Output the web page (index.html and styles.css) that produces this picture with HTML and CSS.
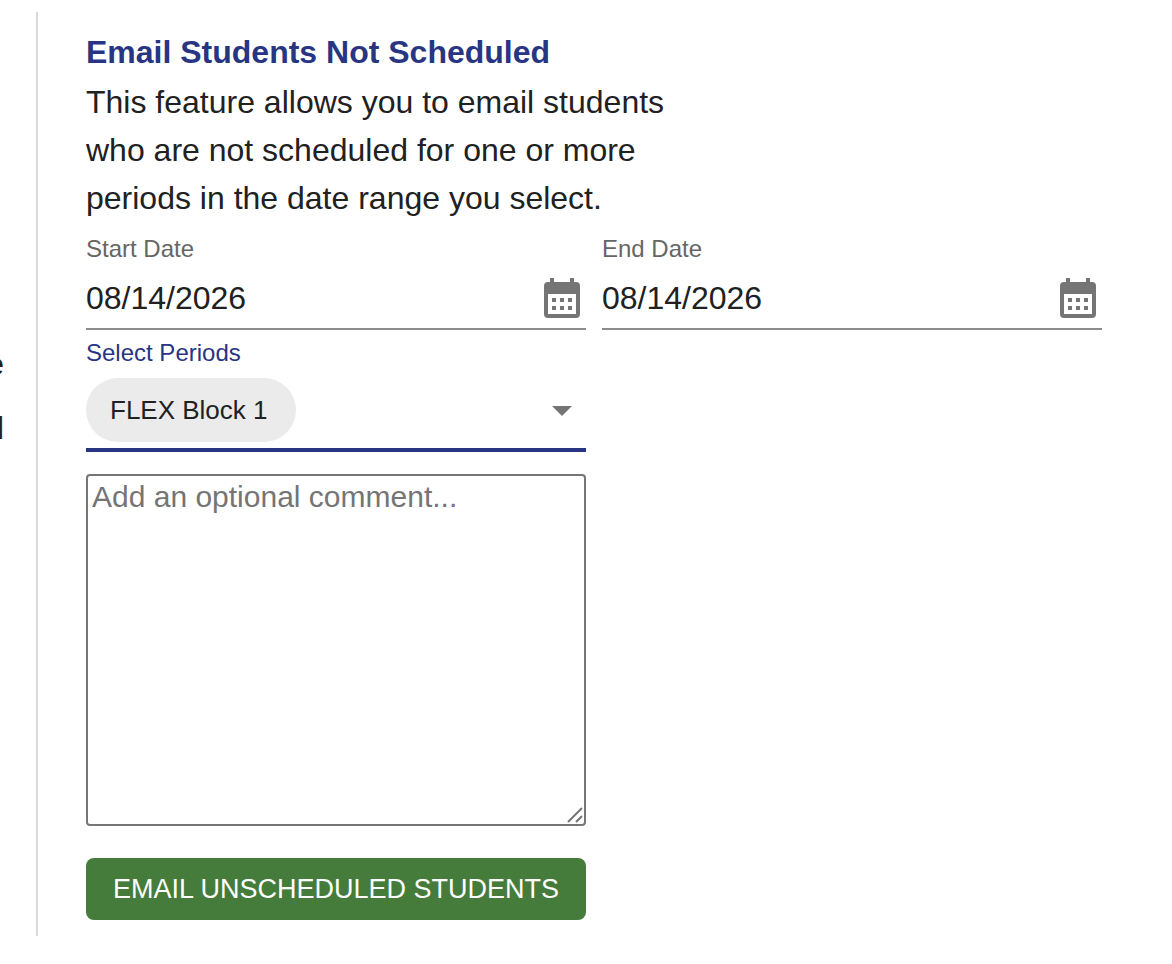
FILE: index.html
```
<!DOCTYPE html>
<html lang="en">
<head>
    <meta charset="UTF-8">
    <meta name="viewport" content="width=device-width, initial-scale=1.0">
    <title>Email Students Not Scheduled</title>
    <link rel="stylesheet" href="styles.css">
</head>
<body>
    <div class="page">
        <aside class="side">
            <p>e</p>
            <p>d</p>
        </aside>

        <main class="panel">
            <h1>Email Students Not Scheduled</h1>
            <p class="intro">This feature allows you to email students who are not scheduled for one or more periods in the date range you select.</p>

            <form id="emailForm">
                <div class="field">
                    <label for="startDate">Start Date</label>
                    <div class="control">
                        <input type="text" id="startDate" name="startDate" value="08/14/2026">
                        <button type="button" class="icon-btn" aria-label="Choose start date">
                            <svg width="36" height="40" viewBox="0 0 36 40">
                                <path fill="currentColor" fill-rule="evenodd" d="M6 0h4v4h16V0h4v4h2a4 4 0 0 1 4 4v28a4 4 0 0 1-4 4H4a4 4 0 0 1-4-4V8a4 4 0 0 1 4-4h2zM4 16v20h28V16zM8 20h4v4H8zM16 20h4v4h-4zM24 20h4v4h-4zM8 28h4v4H8zM16 28h4v4h-4zM24 28h4v4h-4z"/>
                            </svg>
                        </button>
                    </div>
                </div>

                <div class="field">
                    <label for="endDate">End Date</label>
                    <div class="control">
                        <input type="text" id="endDate" name="endDate" value="08/14/2026">
                        <button type="button" class="icon-btn" aria-label="Choose end date">
                            <svg width="36" height="40" viewBox="0 0 36 40">
                                <path fill="currentColor" fill-rule="evenodd" d="M6 0h4v4h16V0h4v4h2a4 4 0 0 1 4 4v28a4 4 0 0 1-4 4H4a4 4 0 0 1-4-4V8a4 4 0 0 1 4-4h2zM4 16v20h28V16zM8 20h4v4H8zM16 20h4v4h-4zM24 20h4v4h-4zM8 28h4v4H8zM16 28h4v4h-4zM24 28h4v4h-4z"/>
                            </svg>
                        </button>
                    </div>
                </div>

                <div class="field periods">
                    <label for="periods">Select Periods</label>
                    <div class="control">
                        <select id="periods" name="periods">
                            <option>FLEX Block 1</option>
                        </select>
                        <svg class="arrow" width="48" height="48" viewBox="0 0 24 24">
                            <path fill="currentColor" d="M7 10l5 5 5-5z"/>
                        </svg>
                    </div>
                </div>

                <div class="comment">
                    <textarea id="comment" name="comment" aria-label="Comment" placeholder="Add an optional comment..."></textarea>
                    <svg class="grip" width="16" height="16" viewBox="0 0 16 16">
                        <path fill="none" stroke="currentColor" stroke-width="2" d="M1 15L15 1M9 15l6-6"/>
                    </svg>
                </div>

                <button type="submit" class="submit-btn">EMAIL UNSCHEDULED STUDENTS</button>
            </form>
        </main>
    </div>
</body>
</html>
```

FILE: styles.css
```
* {
    margin: 0;
    padding: 0;
    box-sizing: border-box;
}

body {
    font-family: 'Liberation Sans', Helvetica, Arial, sans-serif;
    font-size: 32px;
    line-height: 48px;
    color: #212121;
    background: white;
}

.page {
    display: flex;
    padding: 12px 0 28px;
}

/* end of the neighbouring column, scrolled out to the left */
.side {
    display: flex;
    flex-direction: column;
    align-items: flex-end;
    gap: 16px;
    width: 4px;
    margin-right: 32px;
    padding-top: 328px;
    overflow: hidden;
}

.panel {
    flex: 1;
    border-left: 2px solid #d8d8d8;
    padding: 16px 70px 16px 48px;
}

h1 {
    color: #283583;
    font-size: 32px;
    font-weight: 700;
}

.intro {
    max-width: 620px;
    padding-top: 2px;
}

form {
    display: grid;
    grid-template-columns: 1fr 1fr;
    column-gap: 16px;
    padding-top: 12px;
}

.field label {
    display: block;
    color: #666;
    font-size: 24px;
    line-height: 30px;
}

.control {
    position: relative;
    display: flex;
    align-items: center;
    height: 66px;
    padding-top: 4px;
    border-bottom: 2px solid #8c8c8c;
}

.control input {
    flex: 1;
    min-width: 0;
    border: none;
    outline: none;
    background: none;
    color: inherit;
    font: inherit;
}

.icon-btn {
    display: flex;
    padding: 0 6px;
    border: none;
    background: none;
    color: #757575;
    cursor: pointer;
}

.periods,
.comment,
.submit-btn {
    grid-column: 1;
}

.periods {
    padding-top: 8px;
}

.periods label {
    color: #283583;
}

.periods .control {
    height: 84px;
    border-bottom: 4px solid #283583;
    isolation: isolate;
}

/* chip behind the selected period */
.periods .control::before {
    content: '';
    position: absolute;
    left: 0;
    z-index: -1;
    width: 210px;
    height: 64px;
    border-radius: 32px;
    background: #ebebeb;
}

.periods select {
    width: 100%;
    height: 64px;
    padding: 0 24px;
    appearance: none;
    border: none;
    outline: none;
    background: none;
    color: inherit;
    font: inherit;
    font-size: 26px;
}

.arrow {
    position: absolute;
    right: 0;
    color: #757575;
    pointer-events: none;
}

.comment {
    position: relative;
    display: flex;
    margin-top: 22px;
}

.comment textarea {
    width: 100%;
    height: 352px;
    padding: 4px;
    border: 2px solid #767676;
    border-radius: 4px;
    outline: none;
    resize: none;
    background: none;
    color: inherit;
    font: inherit;
    font-size: 30px;
    line-height: 34px;
}

.comment textarea::placeholder {
    color: #757575;
}

.grip {
    position: absolute;
    right: 3px;
    bottom: 3px;
    color: #757575;
    pointer-events: none;
}

.submit-btn {
    height: 62px;
    margin-top: 32px;
    border: none;
    border-radius: 8px;
    background: #457b3b;
    color: white;
    font: inherit;
    font-size: 27px;
    cursor: pointer;
}

.submit-btn:hover {
    background: #38672f;
}

@media (max-width: 800px) {
    .panel {
        padding-right: 24px;
        padding-left: 24px;
    }

    form {
        grid-template-columns: 1fr;
    }
}
```
